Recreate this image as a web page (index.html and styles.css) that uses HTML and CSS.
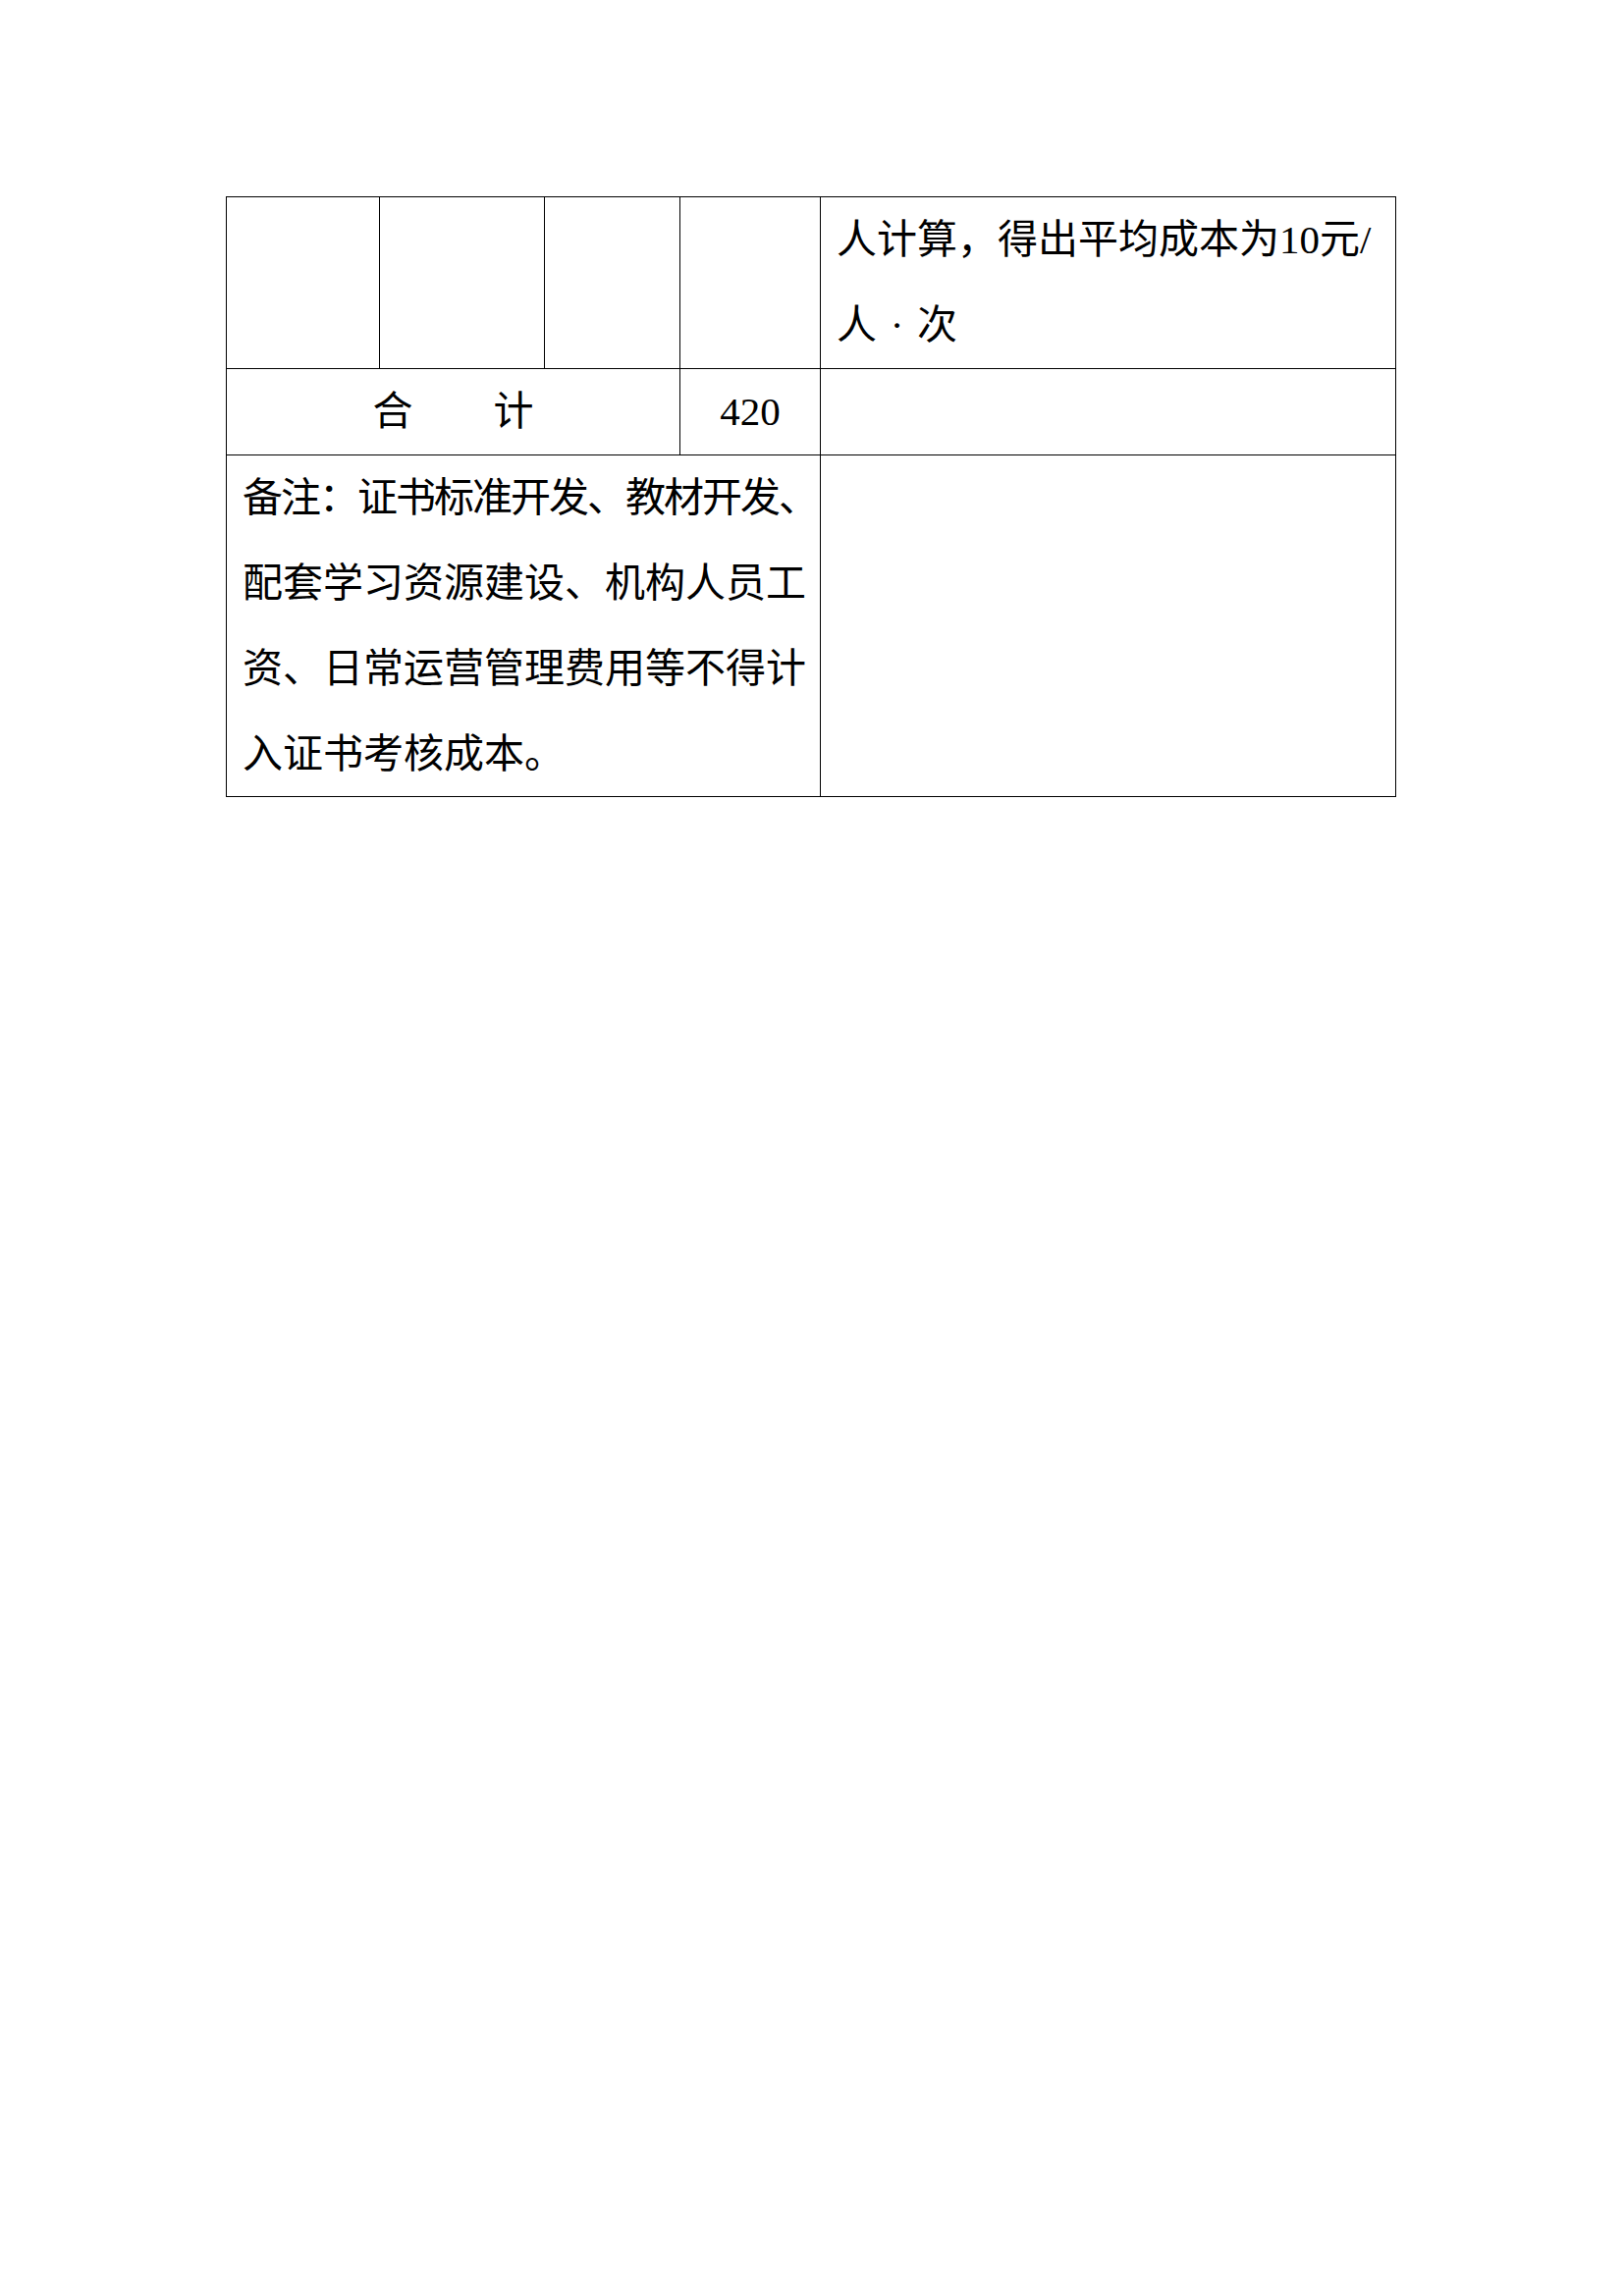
FILE: index.html
```html
<!DOCTYPE html>
<html lang="zh-CN">
<head>
<meta charset="utf-8">
<title>证书考核成本</title>
<link rel="stylesheet" href="styles.css">
</head>
<body>
<div class="page">
  <div class="sheet">
    <div class="cell r1"></div>
    <div class="cell r1"></div>
    <div class="cell r1"></div>
    <div class="cell r1"></div>
    <div class="cell r1 text">人计算，得出平均成本为10元/<br>人<span class="dot">·</span>次</div>

    <div class="cell r2 span3 center">合　　计</div>
    <div class="cell r2 center">420</div>
    <div class="cell r2"></div>

    <div class="cell r3 span4 text"><span class="tight">备注：证书标准开发、教材开发、</span><br>配套学习资源建设、机构人员工<br>资、日常运营管理费用等不得计<br>入证书考核成本。</div>
    <div class="cell r3"></div>
  </div>
</div>
</body>
</html>
```
FILE: styles.css
```css
html, body {
  margin: 0;
  padding: 0;
  background: #ffffff;
}

.page {
  width: 1654px;
  min-height: 2339px;
  padding: 200px 0 0 230px;
  box-sizing: border-box;
}

.sheet {
  display: grid;
  grid-template-columns: 156px 168px 138px 143px 586px;
  grid-template-rows: 175px 88px 348px;
  width: max-content;
  border-top: 1px solid #000;
  border-left: 1px solid #000;
  font-family: "Liberation Serif", "Noto Sans CJK SC", serif;
  font-size: 41px;
  line-height: 87px;
  color: #000;
}

.cell {
  border-right: 1px solid #000;
  border-bottom: 1px solid #000;
  box-sizing: border-box;
  white-space: nowrap;
  overflow: visible;
}

.text {
  padding: 0 0 0 16px;
}

.center {
  text-align: center;
}

.span3 {
  grid-column: span 3;
}

.span4 {
  grid-column: span 4;
}

.tight {
  letter-spacing: -2px;
}

.dot {
  display: inline-block;
  width: 1em;
  text-align: center;
}
```
